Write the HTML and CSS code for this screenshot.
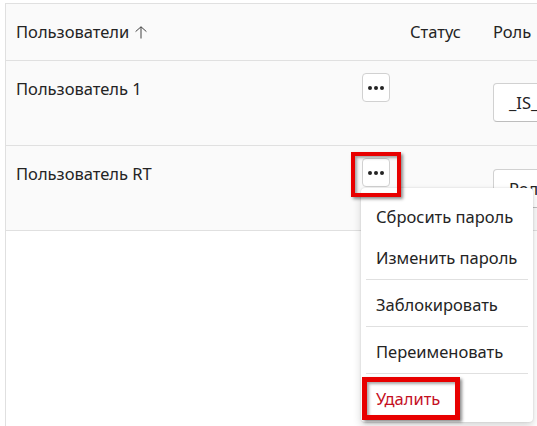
FILE: index.html
```html
<!DOCTYPE html>
<html lang="ru">
<head>
<meta charset="utf-8">
<title>Пользователи</title>
<link rel="stylesheet" href="styles.css">
</head>
<body>
<div class="page">
  <div class="card">
    <div class="head">
      <div class="hcell name">Пользователи
        <svg class="sort" width="12" height="13" viewBox="0 0 12 13"><path d="M6 12.5V0.8M0.6 5.6L6 0.8L11.4 5.6" fill="none" stroke="#424242" stroke-width="1"/></svg>
      </div>
      <div class="hcell"></div>
      <div class="hcell">Статус</div>
      <div class="hcell">Роль</div>
    </div>
    <div class="row">
      <div class="cell-name">Пользователь 1</div>
      <div class="cell-actions"><button class="more"><span class="dot"></span><span class="dot"></span><span class="dot"></span></button></div>
      <div class="cell-status"></div>
      <div class="cell-role r1"><div class="select">_IS_</div></div>
    </div>
    <div class="row">
      <div class="cell-name">Пользователь RT</div>
      <div class="cell-actions"><button class="more"><span class="dot"></span><span class="dot"></span><span class="dot"></span></button></div>
      <div class="cell-status"></div>
      <div class="cell-role r2"><div class="select">Роль</div></div>
    </div>
  </div>

  <div class="menu">
    <div class="item">Сбросить пароль</div>
    <div class="item">Изменить пароль</div>
    <div class="sep"></div>
    <div class="item">Заблокировать</div>
    <div class="sep"></div>
    <div class="item">Переименовать</div>
    <div class="sep"></div>
    <div class="item danger">Удалить</div>
  </div>

  <div class="mark mark-btn"></div>
  <div class="mark mark-del"></div>
</div>
</body>
</html>
```

FILE: styles.css
```css
html, body {
  margin: 0;
  padding: 0;
  background: #ffffff;
  overflow: hidden;
}
body {
  font-family: "Noto Sans", "Open Sans", sans-serif;
  font-size: 16.5px;
  color: #242424;
  width: 537px;
  height: 426px;
}
.page {
  position: relative;
  padding: 3px 0 0 5px;
  height: 423px;
}
.card {
  width: 760px;
  height: 430px;
  border-top: 1px solid #e0e0e0;
  border-left: 1px solid #e0e0e0;
  background: #ffffff;
}
.head, .row {
  display: grid;
  grid-template-columns: 356px 48px 83px 1fr;
  background: #fafafa;
  border-bottom: 1px solid #e0e0e0;
}
.head {
  height: 56px;
  align-items: center;
}
.hcell {
  line-height: 22px;
  white-space: nowrap;
}
.hcell.name {
  padding-left: 10px;
  display: flex;
  align-items: center;
  gap: 6px;
}
.sort {
  margin-top: 1px;
}
.row {
  height: 84px;
  align-items: start;
}
.cell-name {
  padding: 17px 0 0 10px;
  line-height: 22px;
  white-space: nowrap;
}
.cell-actions {
  padding-top: 12px;
}
.more {
  width: 28px;
  height: 29px;
  box-sizing: border-box;
  border: 1px solid #d1d1d1;
  border-radius: 4px;
  background: #ffffff;
  padding: 0;
  display: flex;
  align-items: center;
  justify-content: center;
  gap: 2px;
}
.dot {
  width: 4px;
  height: 4px;
  border-radius: 50%;
  background: #242424;
}
.cell-role.r1 {
  padding-top: 22px;
}
.cell-role.r2 {
  padding-top: 23px;
}
.select {
  width: 220px;
  height: 39px;
  box-sizing: border-box;
  border: 1px solid #d1d1d1;
  border-bottom-color: #bdbdbd;
  border-radius: 4px;
  background: #ffffff;
  padding-left: 15px;
  line-height: 37px;
  white-space: nowrap;
}
.menu {
  position: absolute;
  left: 361px;
  top: 188px;
  width: 172px;
  box-sizing: border-box;
  padding: 8px 0 3px;
  background: #ffffff;
  border-radius: 4px;
  box-shadow: 0 0 2px rgba(0,0,0,0.14), 0 4px 8px rgba(0,0,0,0.16);
}
.item {
  height: 41px;
  line-height: 41px;
  padding-left: 15px;
  white-space: nowrap;
  color: #242424;
}
.item.danger {
  color: #c50f1f;
}
.sep {
  height: 1px;
  background: #e0e0e0;
  margin: 1px 5px 4px 5px;
}
.mark {
  position: absolute;
  box-sizing: border-box;
  border: 4px solid #e80000;
  box-shadow: 2px 2px 3px rgba(0,0,0,0.45), inset 2px 2px 3px rgba(0,0,0,0.35);
}
.mark-btn {
  left: 351px;
  top: 152px;
  width: 50px;
  height: 45px;
}
.mark-del {
  left: 362px;
  top: 377px;
  width: 98px;
  height: 43px;
  border-width: 5px;
}
```
